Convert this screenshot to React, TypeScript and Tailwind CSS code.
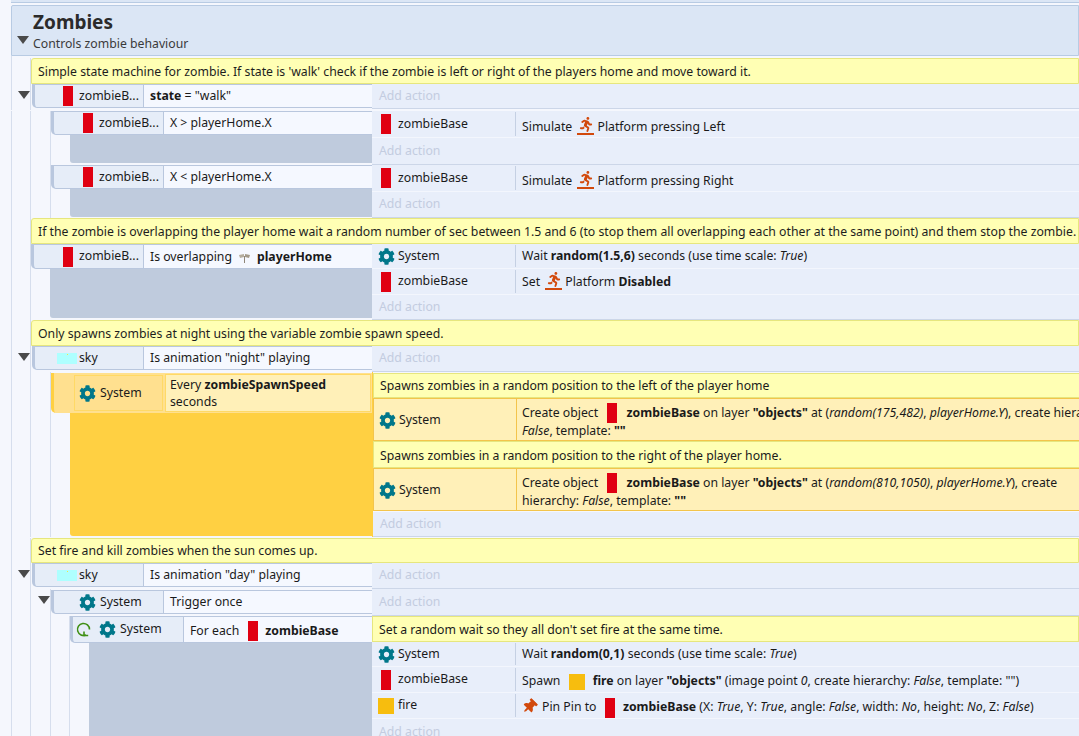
import type { ReactNode } from "react";
import { FaCog, FaRunning, FaThumbtack } from "react-icons/fa";

const Red = () => <span className="inline-block w-[10px] h-[20px] my-[-2px] bg-[#e00012] align-middle" />;
const Fire = () => <span className="inline-block w-[16px] h-[16px] my-[-1px] bg-[#f7bd0e] align-middle" />;
const Sky = () => (
  <span className="inline-flex justify-center w-[20px] h-[11px] bg-[#aeffff]">
    <span className="w-[1px] h-[1px] mt-[1px] bg-[#f5e642]" />
  </span>
);
const Gear = () => <FaCog className="w-[17px] h-[17px] text-[#00778a] shrink-0" />;

const Plat = () => (
  <span className="inline-flex flex-col items-center w-[17px] h-[18px] ml-[2px] mr-[3px] my-[-3px] align-middle relative top-[-2px]">
    <FaRunning className="w-[14px] h-[15px] text-[#d2490c]" />
    <span className="w-[17px] h-[2px] bg-[#d2490c] mt-[1px]" />
  </span>
);

const Arrow = () => (
  <span className="w-0 h-0 border-l-[6px] border-r-[6px] border-t-[8px] border-l-transparent border-r-transparent border-t-[#4a4a4a]" />
);

// one gutter cell per nesting level, the guide lines run through them
function Gutter({ depth, arrow }: { depth: number; arrow?: boolean }) {
  const cells = [];
  for (let i = 0; i < depth; i++) {
    cells.push(
      <div
        key={i}
        className={
          "border-l border-[#d6deed] flex items-start justify-end shrink-0 " +
          (i === 1 ? "w-[20px]" : "w-[19px]")
        }
      >
        {arrow && i === depth - 1 && (
          <span className="flex mt-[7px]">
            <Arrow />
          </span>
        )}
      </div>
    );
  }
  return <div className="flex shrink-0 pl-[11px]">{cells}</div>;
}

function Comment({ children, h }: { children: ReactNode; h: string }) {
  return (
    <div className="flex">
      <Gutter depth={1} />
      <div className="flex-1 border-l border-[#d6deed]">
        <div className={"bg-[#ffffb4] border border-[#e6e67e] rounded-tl-[3px] pl-[6px] pt-[2px] flex items-center whitespace-nowrap text-[#1d1d1d] " + h}>
          {children}
        </div>
      </div>
    </div>
  );
}

function AddAction({ h }: { h: string }) {
  return (
    <div className={"bg-[#e8eefa] border-b border-[#ccd6e8] text-[#c3cce0] pl-[7px] flex items-center " + h}>
      Add action
    </div>
  );
}

function Action({
  obj,
  children,
  h,
  selected,
  pt,
}: {
  obj: ReactNode;
  children: ReactNode;
  h: string;
  selected?: boolean;
  pt?: string;
}) {
  return (
    <div
      className={
        "flex border-b whitespace-nowrap " +
        h +
        (selected ? " bg-[#fff0b8] border border-[#f3c44b]" : " bg-[#e8eefa] border-[#f3f6fd]")
      }
    >
      <div
        className={
          "shrink-0 flex items-center gap-[4px] " +
          (selected ? "w-[142px] pl-[5px] pt-[2px]" : "w-[143px] pl-[6px]")
        }
      >
        {obj}
      </div>
      <div className={"flex-1 flex items-center border-l " + (selected ? "pl-[5px] border-[#f3c44b]" : "pl-[6px] border-[#c5d0e3] my-[1px]")}>
        <div className={pt || ""}>{children}</div>
      </div>
    </div>
  );
}

const Obj = ({ icon, name }: { icon: ReactNode; name: string }) => (
  <>
    <span className="w-[16px] flex justify-center shrink-0">{icon}</span>
    <span>{name}</span>
  </>
);

function Condition({
  obj,
  children,
  h,
  handleW,
  selected,
}: {
  obj: ReactNode;
  children: ReactNode;
  h: string;
  handleW: string;
  selected?: boolean;
}) {
  return (
    <div
      className={
        "flex border-l-[3px] rounded-bl-[5px] " +
        h +
        (selected ? " border-[#ffd042] bg-[#ffe08f]" : " border-[#b9c7de] bg-[#e6edf8] border-y border-y-[#b9c7de]")
      }
    >
      <div className={"flex items-center shrink-0 whitespace-nowrap " + handleW}>{obj}</div>
      <div
        className={
          "flex-1 flex items-center border-l " +
          (selected ? "pl-[4px] border border-[#ffd966] bg-[#fff0b8] m-[1px] leading-[17px]" : "pl-[6px] border-[#b9c7de] bg-[#f5f8ff]")
        }
      >
        <div className={selected ? "" : "pt-[1px]"}>{children}</div>
      </div>
    </div>
  );
}

const RedObj = () => (
  <>
    <span className="w-[16px] flex justify-center shrink-0">
      <Red />
    </span>
    <span className="ml-[3px]">zombieB...</span>
  </>
);

export default function App() {
  return (
    <div
      className="w-[1079px] h-[736px] overflow-hidden bg-[#f5f7fd] text-[12.25px] text-[#1a1a1a]"
      style={{ fontFamily: '"Noto Sans", "Open Sans", sans-serif' }}
    >
      <div className="h-[3px] ml-[11px] bg-[#dbe6f5] border-b border-[#b8cbe3]" />

      {/* group header */}
      <div className="relative ml-[11px] mt-[2px] h-[51px] bg-[#dbe6f5] border border-[#b8cbe3] rounded-tl-[2px] pl-[21px]">
        <div className="text-[19px] font-bold leading-[24px] mt-[4px] text-[#2b2b2b]">Zombies</div>
        <div className="leading-[18px] mt-[1px] text-[#3a3a3a]">Controls zombie behaviour</div>
        <span className="absolute left-[5px] top-[30px] flex">
          <Arrow />
        </span>
      </div>

      <div className="h-[2px] ml-[11px] border-l border-[#d6deed]" />

      <Comment h="h-[26px]">
        Simple state machine for zombie. If state is 'walk' check if the zombie is left or right of the players home and move toward it.
      </Comment>

      {/* state = walk */}
      <div className="flex">
        <div className="w-[372px] flex shrink-0">
          <Gutter depth={1} arrow />
          <div className="flex-1 border-l border-[#d6deed] pl-px pb-[2px]">
            <Condition h="h-[24px]" handleW="w-[108px] pl-[25px]" obj={<RedObj />}>
              <b>state</b> = "walk"
            </Condition>
          </div>
        </div>
        <div className="flex-1">
          <AddAction h="h-[25px]" />
        </div>
      </div>

      <div className="flex mt-px">
        <div className="w-[372px] flex shrink-0">
          <Gutter depth={2} />
          <div className="flex-1 border-l border-[#d6deed] pb-[2px]">
            <Condition h="h-[24px]" handleW="w-[109px] pl-[26px]" obj={<RedObj />}>
              X &gt; playerHome.X
            </Condition>
            <div className="ml-[19px] h-[28px] bg-[#bfcbdd] rounded-bl-[3px]" />
          </div>
        </div>
        <div className="flex-1">
          <Action h="h-[27px]" pt="pt-[6px]" obj={<Obj icon={<Red />} name="zombieBase" />}>
            Simulate <Plat />Platform pressing Left
          </Action>
          <AddAction h="h-[27px]" />
        </div>
      </div>

      <div className="flex">
        <div className="w-[372px] flex shrink-0">
          <Gutter depth={2} />
          <div className="flex-1 border-l border-[#d6deed] pb-[1px]">
            <Condition h="h-[24px]" handleW="w-[109px] pl-[26px]" obj={<RedObj />}>
              X &lt; playerHome.X
            </Condition>
            <div className="ml-[19px] h-[28px] bg-[#bfcbdd] rounded-bl-[3px]" />
          </div>
        </div>
        <div className="flex-1">
          <Action h="h-[27px]" pt="pt-[6px]" obj={<Obj icon={<Red />} name="zombieBase" />}>
            Simulate <Plat />Platform pressing Right
          </Action>
          <AddAction h="h-[26px]" />
        </div>
      </div>

      <Comment h="h-[26px]">
        If the zombie is overlapping the player home wait a random number of sec between 1.5 and 6 (to stop them all overlapping each other at the same point) and them stop the zombie.
      </Comment>

      {/* overlapping */}
      <div className="flex">
        <div className="w-[372px] flex shrink-0">
          <Gutter depth={1} />
          <div className="flex-1 border-l border-[#d6deed] pb-[2px]">
            <Condition h="h-[25px]" handleW="w-[109px] pl-[26px]" obj={<RedObj />}>
              Is overlapping
              <svg viewBox="0 0 11 10" className="inline-block w-[11px] h-[10px] mx-[7px] align-middle">
                <path d="M5 3h1v7H5z" fill="#8f8678" />
                <path d="M0 2l5-1v3L1 5z" fill="#b5ad9e" />
                <path d="M6 1l5 1-1 3-4-1z" fill="#a39a8a" />
              </svg>
              <b>playerHome</b>
            </Condition>
            <div className="ml-[19px] h-[49px] bg-[#bfcbdd] rounded-bl-[3px]" />
          </div>
        </div>
        <div className="flex-1">
          <Action h="h-[25px]" obj={<Obj icon={<Gear />} name="System" />}>
            Wait <b>random(1.5,6)</b> seconds (use time scale: <i>True</i>)
          </Action>
          <Action h="h-[26px]" pt="pt-[2px]" obj={<Obj icon={<Red />} name="zombieBase" />}>
            Set <Plat />Platform <b>Disabled</b>
          </Action>
          <AddAction h="h-[25px]" />
        </div>
      </div>

      <Comment h="h-[26px]">Only spawns zombies at night using the variable zombie spawn speed.</Comment>

      {/* sky night */}
      <div className="flex">
        <div className="w-[372px] flex shrink-0">
          <Gutter depth={1} arrow />
          <div className="flex-1 border-l border-[#d6deed] pl-px">
            <Condition h="h-[24px]" handleW="w-[108px] pl-[22px] gap-[2px]" obj={<><Sky /><span>sky</span></>}>
              Is animation "night" playing
            </Condition>
          </div>
        </div>
        <div className="flex-1">
          <AddAction h="h-[26px]" />
        </div>
      </div>

      {/* every zombieSpawnSpeed, selected */}
      <div className="flex">
        <div className="w-[372px] flex shrink-0">
          <Gutter depth={2} />
          <div className="flex-1 border-l border-[#d6deed] pt-px">
            <Condition
              selected
              h="h-[40px]"
              handleW="w-[110px]"
              obj={
                <div className="ml-[20px] w-[89px] h-[36px] border border-[#ffd966] flex items-center gap-[4px] pl-[4px]">
                  <Gear />
                  <span>System</span>
                </div>
              }
            >
              Every <b>zombieSpawnSpeed</b>
              <br />
              seconds
            </Condition>
            <div className="ml-[19px] h-[123px] bg-[#ffd042] rounded-bl-[3px]" />
          </div>
        </div>
        <div className="flex-1 border-l border-[#ffd042] pt-px">
          <div className="h-[25px] bg-[#ffffb4] border border-[#e6e67e] pl-[6px] pt-[2px] flex items-center whitespace-nowrap">
            Spawns zombies in a random position to the left of the player home
          </div>
          <Action selected h="h-[43px]" pt="pt-[4px] leading-[18px]" obj={<Obj icon={<Gear />} name="System" />}>
            Create object <span className="mx-[6px]"><Red /></span> <b>zombieBase</b> on layer <b>"objects"</b> at (<i>random(175,482)</i>, <i>playerHome.Y</i>), create hierarchy:
            <br />
            <i>False</i>, template: <b>""</b>
          </Action>
          <div className="h-[27px] bg-[#ffffb4] border border-[#e6e67e] pl-[6px] pt-[3px] flex items-center whitespace-nowrap">
            Spawns zombies in a random position to the right of the player home.
          </div>
          <Action selected h="h-[43px]" pt="pt-[4px] leading-[18px]" obj={<Obj icon={<Gear />} name="System" />}>
            Create object <span className="mx-[6px]"><Red /></span> <b>zombieBase</b> on layer <b>"objects"</b> at (<i>random(810,1050)</i>, <i>playerHome.Y</i>), create
            <br />
            hierarchy: <i>False</i>, template: <b>""</b>
          </Action>
          <div className="pt-px">
            <AddAction h="h-[25px]" />
          </div>
        </div>
      </div>

      <div className="h-px ml-[11px] border-l border-[#d6deed]" />

      <Comment h="h-[25px]">Set fire and kill zombies when the sun comes up.</Comment>

      {/* sky day */}
      <div className="flex">
        <div className="w-[372px] flex shrink-0">
          <Gutter depth={1} arrow />
          <div className="flex-1 border-l border-[#d6deed] pl-px">
            <Condition h="h-[24px]" handleW="w-[108px] pl-[22px] gap-[2px]" obj={<><Sky /><span>sky</span></>}>
              Is animation "day" playing
            </Condition>
          </div>
        </div>
        <div className="flex-1">
          <AddAction h="h-[26px]" />
        </div>
      </div>

      {/* trigger once */}
      <div className="flex">
        <div className="w-[372px] flex shrink-0">
          <Gutter depth={2} arrow />
          <div className="flex-1 border-l border-[#d6deed] pt-px">
            <Condition h="h-[24px]" handleW="w-[109px] pl-[25px] gap-[4px]" obj={<><Gear /><span>System</span></>}>
              Trigger once
            </Condition>
          </div>
        </div>
        <div className="flex-1">
          <AddAction h="h-[27px]" />
        </div>
      </div>

      {/* for each */}
      <div className="flex">
        <div className="w-[372px] flex shrink-0">
          <Gutter depth={3} />
          <div className="flex-1 border-l border-[#d6deed]">
            <Condition
              h="h-[27px]"
              handleW="w-[110px] pl-[3px] gap-[4px]"
              obj={
                <>
                  <svg viewBox="0 0 15 15" className="w-[15px] h-[15px] mr-[4px] shrink-0" fill="none" stroke="#3f8f14" strokeWidth="1.6">
                    <path d="M10 12.9A6 6 0 1 1 13.5 7.5" />
                    <path d="M8 9.5v4h4.2" />
                  </svg>
                  <Gear />
                  <span>System</span>
                </>
              }
            >
              <div className="flex items-center pt-[2px]">
                For each <span className="ml-[9px] mr-[7px] flex"><Red /></span> <b>zombieBase</b>
              </div>
            </Condition>
            <div className="ml-[19px] h-[110px] bg-[#bfcbdd]" />
          </div>
        </div>
        <div className="flex-1">
          <div className="h-[26px] bg-[#ffffb4] border border-[#e6e67e] pl-[6px] pt-[2px] flex items-center whitespace-nowrap">
            Set a random wait so they all don't set fire at the same time.
          </div>
          <Action h="h-[25px]" obj={<Obj icon={<Gear />} name="System" />}>
            Wait <b>random(0,1)</b> seconds (use time scale: <i>True</i>)
          </Action>
          <Action h="h-[26px]" pt="pt-[4px]" obj={<Obj icon={<Red />} name="zombieBase" />}>
            Spawn <span className="mx-[5px]"><Fire /></span> <b>fire</b> on layer <b>"objects"</b> (image point <i>0</i>, create hierarchy: <i>False</i>, template: "")
          </Action>
          <Action h="h-[26px]" pt="pt-[4px]" obj={<Obj icon={<Fire />} name="fire" />}>
            <FaThumbtack className="inline-block w-[15px] h-[15px] text-[#d2490c] rotate-45 mr-[5px] align-middle relative top-[-2px]" />
            Pin Pin to <span className="mx-[5px]"><Red /></span> <b>zombieBase</b> (X: <i>True</i>, Y: <i>True</i>, angle: <i>False</i>, width: <i>No</i>, height: <i>No</i>, Z: <i>False</i>)
          </Action>
          <AddAction h="h-[27px]" />
        </div>
      </div>
    </div>
  );
}
